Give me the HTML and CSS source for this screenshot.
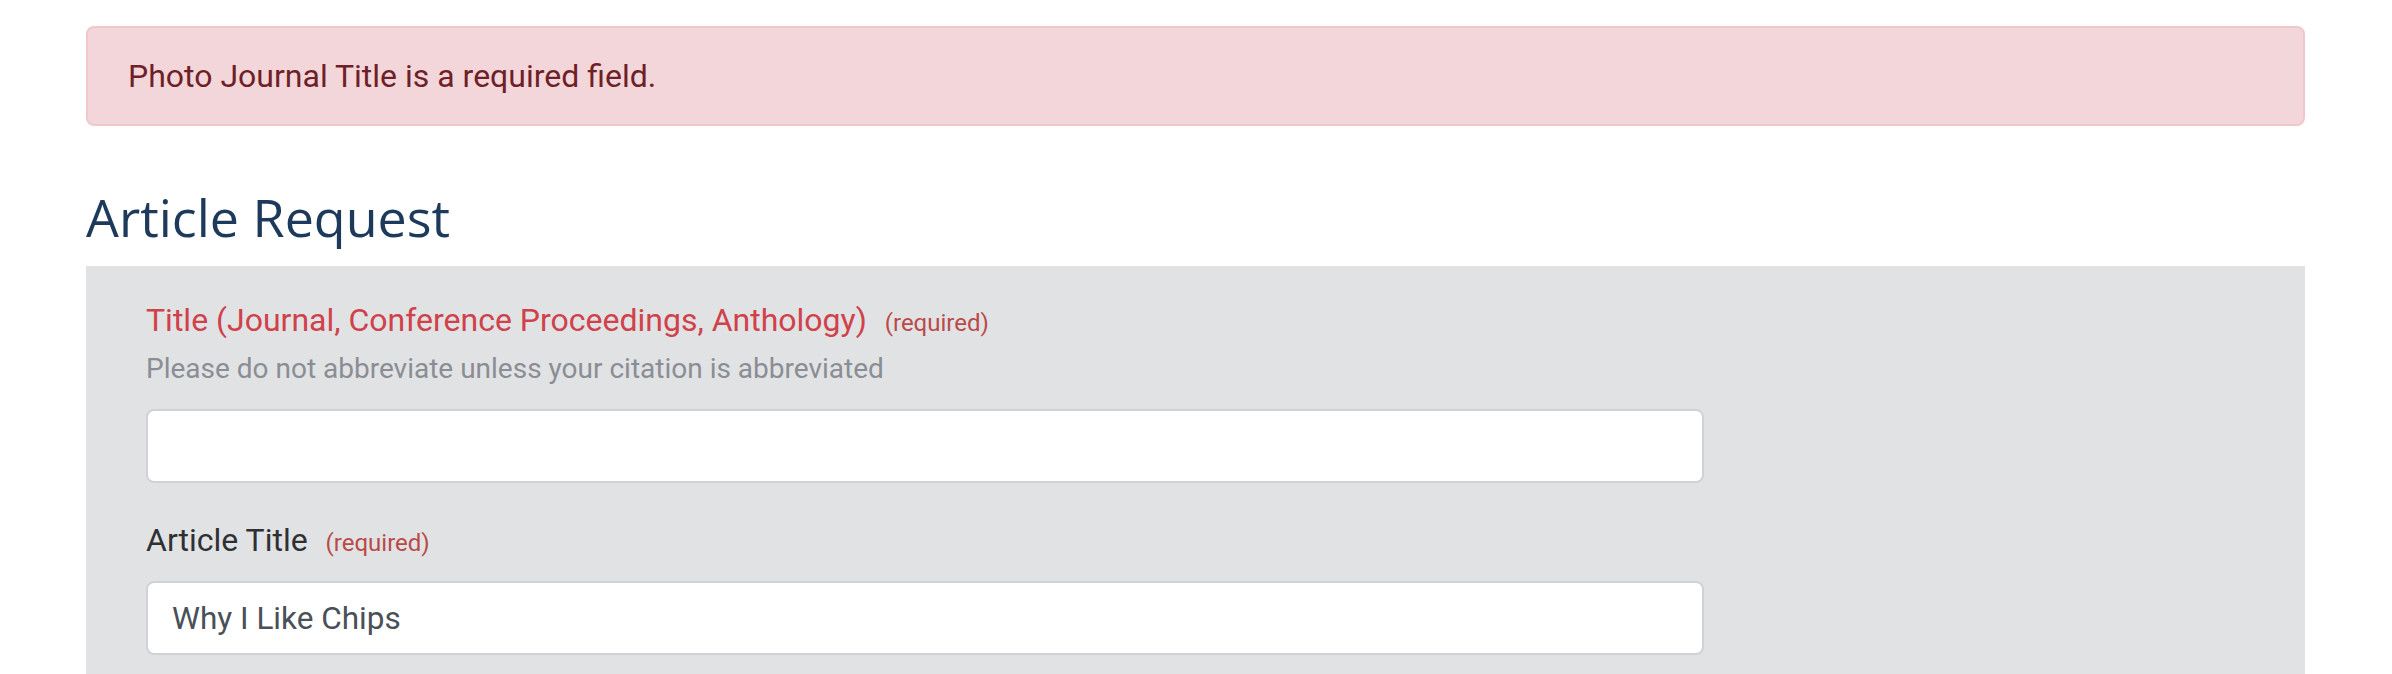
FILE: index.html
```html
<!DOCTYPE html>
<html lang="en">
<head>
<meta charset="utf-8">
<title>Article Request</title>
<link rel="stylesheet" href="styles.css">
</head>
<body>
<div class="page">
  <div class="alert">Photo Journal Title is a required field.</div>
  <h2 class="title">Article Request</h2>
  <div class="panel">
    <div class="group">
      <label class="label label-error label-help" for="journal">Title (Journal, Conference Proceedings, Anthology) <span class="req">(required)</span></label>
      <div class="help">Please do not abbreviate unless your citation is abbreviated</div>
      <input class="control" id="journal" type="text">
    </div>
    <div class="group">
      <label class="label" for="article">Article Title <span class="req">(required)</span></label>
      <input class="control" id="article" type="text" value="Why I Like Chips">
    </div>
  </div>
</div>
</body>
</html>
```
FILE: styles.css
```css
html, body {
  margin: 0;
  background: #ffffff;
  font-family: Roboto, "Noto Sans", "Liberation Sans", sans-serif;
}

.page {
  padding: 26px 87px 0 86px;
}

.alert {
  background: #f3d6d9;
  border: 2px solid #efc7cc;
  border-radius: 8px;
  color: #6e1f28;
  font-size: 32px;
  line-height: 48px;
  padding: 24px 40px;
  margin-bottom: 60px;
}

.title {
  font-family: "Open Sans", "Noto Sans", sans-serif;
  font-weight: 400;
  font-size: 52px;
  line-height: 62px;
  color: #1d3a5a;
  margin: 0 0 18px;
}

.panel {
  background: #e1e2e4;
  padding: 30px 61px 40px 60px;
}

.group {
  margin-bottom: 33px;
}

.label {
  display: block;
  font-size: 32px;
  line-height: 48px;
  color: #2f3033;
  margin-bottom: 14px;
}

.label-help {
  margin-bottom: 1px;
}

.label-error {
  color: #d0414a;
}

.req {
  font-size: 24px;
  color: #b94a48;
  margin-left: 10px;
}

.help {
  font-size: 28px;
  line-height: 42px;
  color: #8a8e94;
  margin-bottom: 19px;
}

.control {
  display: block;
  width: 1558px;
  height: 74px;
  box-sizing: border-box;
  border: 2px solid #cfd2d7;
  border-radius: 8px;
  padding: 0 24px;
  font-family: Roboto, "Noto Sans", sans-serif;
  font-size: 31.5px;
  color: #495057;
  background: #ffffff;
  outline: none;
}
```
